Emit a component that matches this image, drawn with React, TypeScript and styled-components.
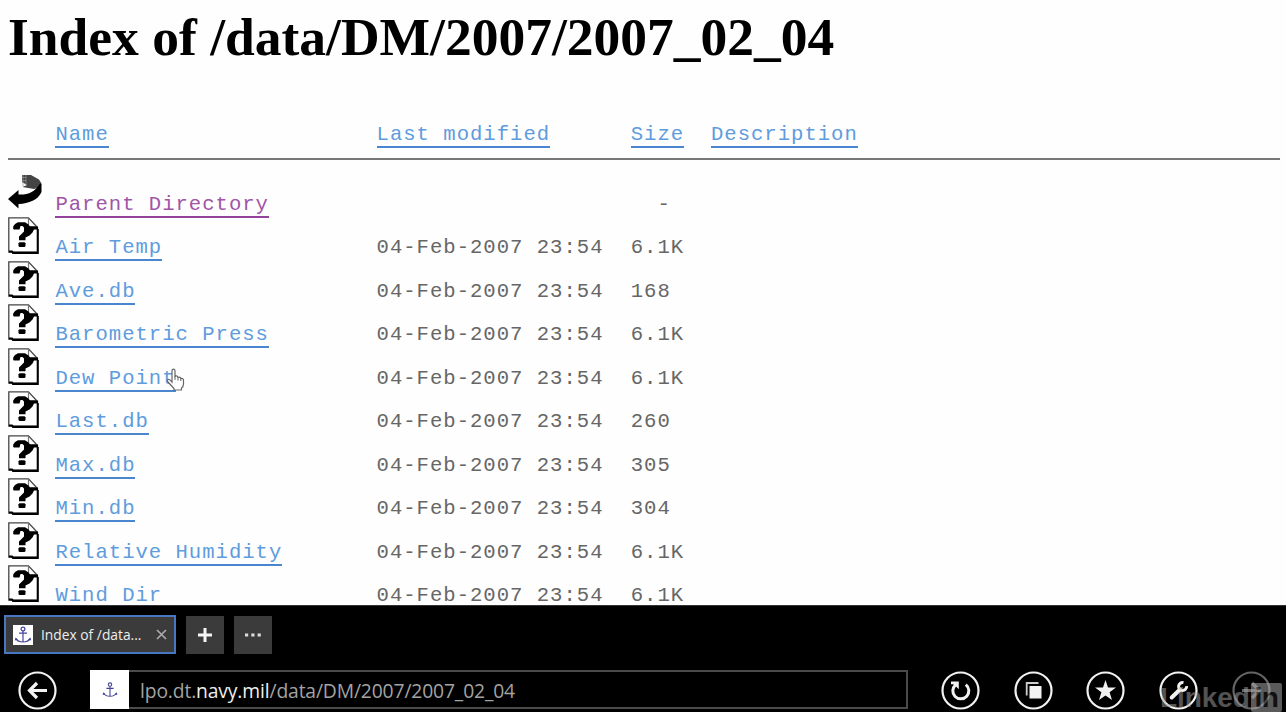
import React from "react";
import styled, { createGlobalStyle } from "styled-components";

const GlobalStyle = createGlobalStyle`
  * { box-sizing: border-box; }
  body { margin: 0; background: #fff; overflow: hidden; }
`;

const Window = styled.div`
  width: 1286px;
  height: 712px;
  display: flex;
  flex-direction: column;
  overflow: hidden;
  position: relative;
`;

const Page = styled.main`
  height: 605px;
  flex: none;
  overflow: hidden;
  padding: 0 6px 0 8px;
  background: #fefefe;
`;

const Title = styled.h1`
  margin: 0;
  padding-top: 6px;
  height: 121px;
  font: bold 53.5px/62px "Liberation Serif", serif;
  color: #000;
  white-space: nowrap;
`;

const Row = styled.div<{ $height?: number }>`
  display: grid;
  grid-template-columns: 47.4px 321.2px 254.2px 80.2px 1fr;
  align-items: end;
  height: ${(p) => p.$height ?? 43.5}px;
  font: 20.6px/24px "Liberation Mono", "Courier New", monospace;
  letter-spacing: 0.99px;
  white-space: pre;
  color: #666;
`;

const Cell = styled.span`
  height: 24px;
  margin-bottom: -6px;
`;

const Link = styled.a<{ $visited?: boolean }>`
  display: inline-block;
  height: 25px;
  color: ${(p) => (p.$visited ? "#a055a8" : "#5f9cdd")};
  border-bottom: 2px solid ${(p) => (p.$visited ? "#93439c" : "#4a86cf")};
  text-decoration: none;
`;

const Rule = styled.hr`
  margin: 17px 0 0;
  height: 2px;
  border: 0;
  background: #777;
`;

const IconBox = styled.span`
  display: flex;
  align-items: flex-end;
  height: 38px;
`;

const Chrome = styled.footer`
  flex: 1;
  background: #000;
  border-top: 1px solid #333;
  font-family: "Open Sans", "Noto Sans", sans-serif;
`;

const TabStrip = styled.div`
  display: flex;
  gap: 10px;
  padding: 9px 0 0 4px;
  height: 65px;
`;

const Tab = styled.div`
  display: flex;
  align-items: center;
  width: 172px;
  height: 39px;
  padding: 0 7px;
  border: 2px solid #4877c2;
  background: #3b3b3b;
  color: #eee;
  font-size: 13.8px;
`;

const TabTitle = styled.span`
  flex: 1;
  padding-left: 8px;
  letter-spacing: 0;
  white-space: nowrap;
`;

const StripButton = styled.button`
  display: grid;
  place-items: center;
  width: 38px;
  height: 38px;
  margin-top: 1px;
  padding: 0;
  border: 0;
  background: #3b3b3b;
`;

const NavBar = styled.div`
  display: flex;
  align-items: flex-start;
  padding: 0 15px 0 18px;
`;

const AddressBar = styled.div`
  display: flex;
  width: 818px;
  height: 39px;
  margin: -1px 33px 0 33px;
  border: 2px solid #4b4b4b;
`;

const SiteIcon = styled.span`
  display: grid;
  place-items: center;
  width: 39px;
  height: 39px;
  margin: -2px 0 0 -2px;
  background: #fff;
`;

const Url = styled.span`
  padding-left: 11px;
  font-size: 19.3px;
  line-height: 38px;
  letter-spacing: -0.14px;
  color: #a3a3a3;
  white-space: nowrap;
  b { font-weight: 400; color: #eee; }
`;

const Actions = styled.div`
  display: flex;
  gap: 33.7px;
`;

const RoundButton = styled.button<{ $dim?: boolean }>`
  flex: none;
  width: 39px;
  height: 39px;
  padding: 0;
  border: 0;
  background: none;
  color: ${(p) => (p.$dim ? "#656565" : "#f2f2f2")};
  svg { display: block; }
`;

const Pointer = styled.svg`
  position: absolute;
  left: 165px;
  top: 368px;
`;

const Watermark = styled.div`
  position: absolute;
  left: 1160px;
  top: 683px;
  display: flex;
  width: 122px;
  height: 29px;
  justify-content: space-between;
  opacity: 0.5;
  font: bold 28px/29px "Liberation Sans", sans-serif;
  letter-spacing: -0.1px;
  color: #a5a5a5;
`;

const WatermarkBox = styled.span`
  width: 31px;
  height: 29px;
  border-radius: 2px;
  background: #b4b4b4;
  color: #222;
  text-align: center;
  letter-spacing: -0.5px;
`;

const UnknownFile = () => (
  <svg width="31" height="37" viewBox="0 0 31 37">
    <path d="M.8.8H20.5L29.5 10.5V35H.8Z" fill="#fff" stroke="#444" strokeWidth="1.3" />
    <path d="M1 34.5H4L5 36H29.8V12" fill="none" stroke="#000" strokeWidth="2" />
    <path d="M20.5 1V9.5H28" fill="none" stroke="#777" strokeWidth="1.2" />
    <path
      d="M5.2 12V9.5L7 7L10 5.3H17L20.5 7.5L22 9.5H30V12.5H26L24.5 15.5L21.5 18.5L17.5 20.5V23.3H11V19.5L13.5 17L16 14.5V10.5L14.5 9H12.5L11.5 12.5H6Z"
      fill="#000"
    />
    <path d="M11.5 25.3H16.5L17.5 26.3V29.3L16.5 30H11.5L10.5 29.3V26.3Z" fill="#000" />
  </svg>
);

const ParentFolder = () => (
  <svg width="35" height="35" viewBox="0 0 35 35" style={{ marginBottom: 2 }}>
    <path d="M14 1H23L31 5.5L33.5 9.5L32.5 13L26 15L14.5 13L19 11L14 8Z" fill="#444" />
    <path d="M15 1V12M18 1V12M14 3.5H18M14 6.5H18" stroke="#999" strokeWidth=".7" />
    <path d="M0 25L10.5 16V20.5C20 21 27 18 32 9.5L33.5 10V18C30 26 21 29.5 10.5 30V34.5Z" fill="#000" />
  </svg>
);

const Anchor = ({ size }: { size: number }) => (
  <svg width={size} height={size} viewBox="0 0 20 20">
    <rect width="20" height="20" fill="#fff" />
    <g fill="none" stroke="#45459a" strokeWidth="1.2">
      <circle cx="10" cy="4" r="1.9" />
      <path d="M10 6V17M6 8.2H14M3 13.5Q4.5 17 10 17Q15.5 17 17 13.5" />
    </g>
    <path d="M1.8 15.5L2.5 12.5L5 14.8ZM18.2 15.5L17.5 12.5L15 14.8Z" fill="#45459a" />
  </svg>
);

const Round = ({ children, dim, label }: { children: React.ReactNode; dim?: boolean; label: string }) => (
  <RoundButton $dim={dim} aria-label={label}>
    <svg width="39" height="39" viewBox="0 0 39 39" fill="none" stroke="currentColor">
      <circle cx="19.5" cy="19.5" r="18" strokeWidth="2.2" />
      {children}
    </svg>
  </RoundButton>
);

const files: [string, string][] = [
  ["Air Temp", "6.1K"],
  ["Ave.db", "168"],
  ["Barometric Press", "6.1K"],
  ["Dew Point", "6.1K"],
  ["Last.db", "260"],
  ["Max.db", "305"],
  ["Min.db", "304"],
  ["Relative Humidity", "6.1K"],
  ["Wind Dir", "6.1K"],
];

export default function App() {
  return (
    <Window>
      <GlobalStyle />
      <Page>
        <Title>Index of /data/DM/2007/2007_02_04</Title>
        <Row $height={20}>
          <span />
          <Cell><Link>Name</Link></Cell>
          <Cell><Link>Last modified</Link></Cell>
          <Cell><Link>Size</Link></Cell>
          <Cell><Link>Description</Link></Cell>
        </Row>
        <Rule />
        <Row $height={50.5}>
          <IconBox><ParentFolder /></IconBox>
          <Cell><Link $visited>Parent Directory</Link></Cell>
          <Cell />
          <Cell>{"  -"}</Cell>
        </Row>
        {files.map(([name, size]) => (
          <Row key={name}>
            <IconBox><UnknownFile /></IconBox>
            <Cell><Link>{name}</Link></Cell>
            <Cell>04-Feb-2007 23:54</Cell>
            <Cell>{size}</Cell>
          </Row>
        ))}
      </Page>
      <Pointer width="20" height="24" viewBox="0 0 20 24">
        <path
          d="M7 14V3Q7 1.2 8.5 1.2Q10 1.2 10 3V8.5Q12.5 7 13 9.5Q15.5 8.5 15.8 10.5Q18.5 10 18.5 12.5V16Q18.5 18.5 16.5 20V22H9V20.5L3 14Q1.5 12 3.2 11.5Q4.5 11 7 14Z"
          fill="#fff"
          stroke="#666"
          strokeWidth="1.2"
        />
        <path d="M10 8.5V12M13 9.5V12.5M15.8 10.5V13" stroke="#666" />
      </Pointer>
      <Chrome>
        <TabStrip>
          <Tab>
            <Anchor size={20} />
            <TabTitle>Index of /data...</TabTitle>
            <svg width="11" height="11" viewBox="0 0 11 11">
              <path d="M1 1L10 10M10 1L1 10" stroke="#aaa" strokeWidth="1.7" />
            </svg>
          </Tab>
          <StripButton aria-label="New tab">
            <svg width="14" height="14" viewBox="0 0 14 14">
              <path d="M7 0V14M0 7H14" stroke="#f5f5f5" strokeWidth="3" />
            </svg>
          </StripButton>
          <StripButton aria-label="More">
            <svg width="16" height="4" viewBox="0 0 16 4" fill="#ddd">
              <rect y=".5" width="3.2" height="3" />
              <rect x="6.3" y=".5" width="3.2" height="3" />
              <rect x="12.6" y=".5" width="3.2" height="3" />
            </svg>
          </StripButton>
        </TabStrip>
        <NavBar>
          <Round label="Back">
            <path d="M29 19.5H12M19 12L11.5 19.5L19 27" strokeWidth="3.2" />
          </Round>
          <AddressBar>
            <SiteIcon><Anchor size={18} /></SiteIcon>
            <Url>lpo.dt.<b>navy.mil</b>/data/DM/2007/2007_02_04</Url>
          </AddressBar>
          <Actions>
            <Round label="Refresh">
              <path d="M14.6 13.8A8 8 0 1 0 24.8 13.6" strokeWidth="3" />
              <path d="M10 10.5H17.8V18.3L15 15.5L12 13.2H10Z" fill="currentColor" stroke="none" />
            </Round>
            <Round label="Tabs">
              <path d="M12.7 24.5V12H24.5" strokeWidth="1.8" stroke="#ccc" />
              <rect x="15.5" y="15" width="12" height="12.5" fill="currentColor" stroke="none" />
            </Round>
            <Round label="Favorites">
              <path
                d="M19.5 9L22 16.5H30L23.6 21.2L26 29L19.5 24.4L13 29L15.4 21.2L9 16.5H17Z"
                fill="currentColor"
                stroke="none"
              />
            </Round>
            <Round label="Page tools">
              <path d="M12.7 26.5L21 18.5" strokeWidth="4" strokeLinecap="round" />
              <path d="M24.5 11.6A4 4 0 1 0 27.6 15.2" strokeWidth="3" />
            </Round>
            <Round label="Forward" dim>
              <path d="M10 19.5H27M20 12L27.5 19.5L20 27" strokeWidth="3.2" />
            </Round>
          </Actions>
        </NavBar>
      </Chrome>
      <Watermark>
        <span>Linked</span>
        <WatermarkBox>in</WatermarkBox>
      </Watermark>
    </Window>
  );
}
